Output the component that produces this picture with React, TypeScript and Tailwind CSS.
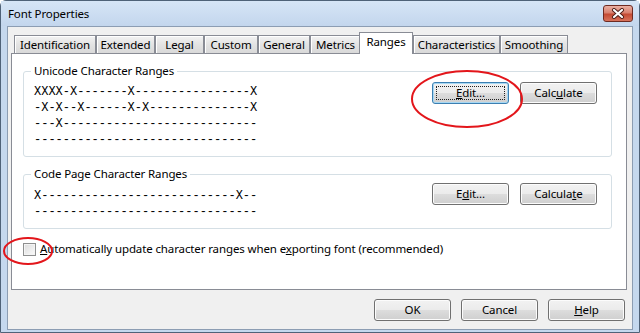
import clsx from "clsx";

const ui = "font-['Noto_Sans',sans-serif] text-[11.5px] tracking-[-0.12px] leading-[16px] text-black";
const mono = "font-['Liberation_Mono',monospace] text-[12px] tracking-normal leading-[16px]";

const tabs = [
  { label: "Identification", w: "w-[82px]" },
  { label: "Extended", w: "w-[59px]" },
  { label: "Legal", w: "w-[49px]" },
  { label: "Custom", w: "w-[54px]" },
  { label: "General", w: "w-[52px]" },
  { label: "Metrics", w: "w-[51px]" },
  { label: "Ranges", w: "w-[54px]", active: true },
  { label: "Characteristics", w: "w-[87px]" },
  { label: "Smoothing", w: "w-[68px]" },
];

const unicodeRows = [
  "XXXX-X-------X----------------X",
  "-X-X--X------X-X--------------X",
  "---X---------------------------",
  "-------------------------------",
];

const codePageRows = [
  "X---------------------------X--",
  "-------------------------------",
];

function Btn({
  children,
  focused,
  className,
}: {
  children: React.ReactNode;
  focused?: boolean;
  className?: string;
}) {
  return (
    <div
      className={clsx(
        "relative w-[77px] h-[22px] rounded-[3px] border flex items-center justify-center bg-[linear-gradient(to_bottom,#f2f2f2_0%,#ebebeb_50%,#dddddd_50%,#cfcfcf_100%)]",
        focused ? "border-[#3c7fb1] shadow-[inset_0_0_0_1px_#a6d8f4]" : "border-[#707070] shadow-[inset_0_0_0_1px_#fcfcfc]",
        className
      )}
    >
      {focused && <div className="absolute inset-[3px] border border-dotted border-[#222]" />}
      <span className="relative">{children}</span>
    </div>
  );
}

function GroupBox({ title, children, className }: { title: string; children: React.ReactNode; className?: string }) {
  return (
    <fieldset className={clsx("border border-[#d5dfe5] rounded-[3px] pl-[7px] pr-[14px]", className)}>
      <legend className="px-[3px]">{title}</legend>
      {children}
    </fieldset>
  );
}

export default function App() {
  return (
    <div className={clsx("relative w-[640px] h-[333px] overflow-hidden", ui)}>
      <div className="w-full h-full flex flex-col bg-[#c5d8ee] border border-[#4f6278] rounded-t-[6px]">
        <div className="h-[25px] flex items-start justify-between pl-[7px] pr-[6px] bg-[linear-gradient(to_bottom,#d6e5f6,#c3d6ed)]">
          <span className="mt-[5px]">Font Properties</span>
          <div className="mt-[4px] w-[30px] h-[17px] rounded-[3px] border border-[#6e2a21] bg-[linear-gradient(to_bottom,#eab0a3_0%,#d9806e_45%,#c44a33_55%,#d8735c_100%)] flex items-center justify-center">
            <svg width="14" height="11" viewBox="0 0 14 11">
              <path d="M3 2 L11 9 M11 2 L3 9" stroke="#4a1c16" strokeWidth="4" strokeLinecap="round" />
              <path d="M3 2 L11 9 M11 2 L3 9" stroke="#ffffff" strokeWidth="2.2" strokeLinecap="round" />
            </svg>
          </div>
        </div>

        <div className="flex-1 ml-[6px] mr-[6px] mb-[2px] bg-[#f0f0f0] border border-[#8c9db3] flex flex-col pl-[3px] pr-[5px] pt-[5px]">
          <div className="flex items-end h-[21px] pl-[3px]">
            {tabs.map((t) =>
              t.active ? (
                <div
                  key={t.label}
                  className={clsx(
                    t.w,
                    "relative z-10 -ml-[2px] -mb-px h-[22px] bg-white border border-b-0 border-[#898c95] flex items-start justify-center pt-[1px]"
                  )}
                >
                  {t.label}
                </div>
              ) : (
                <div
                  key={t.label}
                  className={clsx(
                    t.w,
                    "h-[18px] border border-b-0 border-[#898c95] bg-[linear-gradient(to_bottom,#f3f3f3,#e3e3e3_50%,#d9d9d9)] flex items-center justify-center shadow-[inset_1px_1px_0_#ffffff]"
                  )}
                >
                  {t.label}
                </div>
              )
            )}
          </div>

          <div className="h-[237px] bg-white border border-[#898c95] pl-[11px] pr-[14px] pt-[9px]">
            <GroupBox title="Unicode Character Ranges" className="pb-[8px]">
              <div className="flex justify-between">
                <div className={clsx(mono, "ml-[3px] mt-[5px]")}>
                  {unicodeRows.map((r, i) => (
                    <div key={i}>{r}</div>
                  ))}
                </div>
                <div className="flex gap-[11px] mt-[3px]">
                  <Btn focused>
                    <u>E</u>dit...
                  </Btn>
                  <Btn>
                    Calc<u>u</u>late
                  </Btn>
                </div>
              </div>
            </GroupBox>

            <GroupBox title="Code Page Character Ranges" className="mt-[9px] pb-[8px]">
              <div className="flex justify-between">
                <div className={clsx(mono, "ml-[3px] mt-[6px]")}>
                  {codePageRows.map((r, i) => (
                    <div key={i}>{r}</div>
                  ))}
                </div>
                <div className="flex gap-[11px] mt-[1px]">
                  <Btn>
                    E<u>d</u>it...
                  </Btn>
                  <Btn>
                    Calcula<u>t</u>e
                  </Btn>
                </div>
              </div>
            </GroupBox>

            <div className="flex items-center gap-[4px] mt-[12px]">
              <div className="w-[13px] h-[13px] border border-[#8e8f8f] bg-[linear-gradient(135deg,#dcdcdc,#fbfbfb)] shadow-[inset_0_0_0_1px_#f4f4f4]" />
              <span>
                <u>A</u>utomatically update character ranges when e<u>x</u>porting font (recommended)
              </span>
            </div>
          </div>

          <div className="flex justify-end gap-[10px] pt-[9px] pr-[2px]">
            <Btn>OK</Btn>
            <Btn>Cancel</Btn>
            <Btn>
              <u>H</u>elp
            </Btn>
          </div>
        </div>
      </div>

      <svg className="absolute inset-0 pointer-events-none" width="640" height="333">
        <ellipse cx="467" cy="99" rx="55" ry="28" fill="none" stroke="#e3161b" strokeWidth="2" />
        <ellipse cx="28" cy="251" rx="24" ry="13" fill="none" stroke="#e3161b" strokeWidth="2" />
      </svg>
    </div>
  );
}
